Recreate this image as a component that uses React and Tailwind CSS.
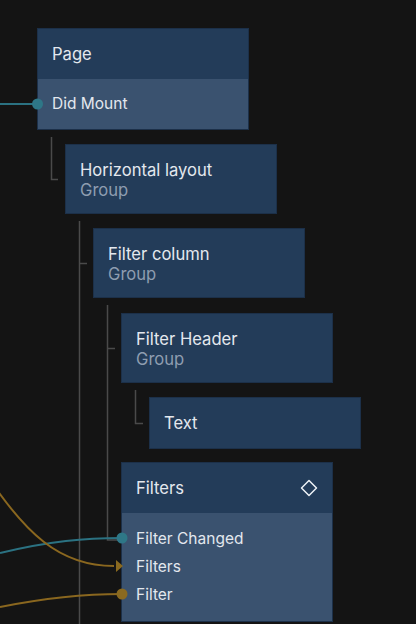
import React from 'react';

const font = { fontFamily: 'Inter, "Noto Sans", sans-serif' };

function Node({ title, subtitle, className = '', children, icon }) {
  return (
    <div className={`w-[212px] border border-[#1c3049] bg-[#233c59] ${className}`}>
      {subtitle !== undefined ? (
        <div className="flex h-[68px] flex-col justify-center px-[14px] pt-[2px]">
          <div className="text-[16.6px] leading-[20px] text-[#e3e8ee]">{title}</div>
          <div className="text-[16.6px] leading-[20px] text-[#8e9db0]">{subtitle}</div>
        </div>
      ) : (
        <div className="flex h-[50px] items-center justify-between px-[14px]">
          <div className="text-[16.6px] leading-[20px] text-[#e3e8ee]">{title}</div>
          {icon}
        </div>
      )}
      {children && <div className="bg-[#3a526f]">{children}</div>}
    </div>
  );
}

function Row({ label }) {
  return (
    <div className="flex h-[28px] items-center px-[14px] text-[15.5px] text-[#e3e8ee]">{label}</div>
  );
}

export default function App() {
  return (
    <div className="relative h-[624px] w-[416px] overflow-hidden bg-[#141414]" style={font}>
      <div className="flex flex-col pt-[28px]">
        <Node title="Page" className="ml-[37px]">
          <div className="flex h-[50px] items-center px-[14px] text-[15.5px] text-[#e3e8ee]">Did Mount</div>
        </Node>
        <Node title="Horizontal layout" subtitle="Group" className="ml-[65px] mt-[14px]" />
        <Node title="Filter column" subtitle="Group" className="ml-[93px] mt-[14px]" />
        <Node title="Filter Header" subtitle="Group" className="ml-[121px] mt-[15px]" />
        <Node title="Text" className="ml-[149px] mt-[14px]" />
        <Node
          title="Filters"
          className="ml-[121px] mt-[13px]"
          icon={
            <svg width="18" height="18" viewBox="0 0 18 18">
              <path d="M9 1.5 L16.5 9 L9 16.5 L1.5 9 Z" fill="none" stroke="#eef2f6" strokeWidth="1.5" strokeLinejoin="round" />
            </svg>
          }
        >
          <div className="py-[12px]">
            <Row label="Filter Changed" />
            <Row label="Filters" />
            <Row label="Filter" />
          </div>
        </Node>
      </div>

      <svg className="pointer-events-none absolute left-0 top-0" width="416" height="624">
        <g stroke="#4a4a4a" strokeWidth="1.5" fill="none">
          <path d="M51.5 137 V179.5 H58" />
          <path d="M79.5 221 V624 M79.5 263.5 H87" />
          <path d="M107.5 305 V540 H121 M107.5 348.5 H115" />
          <path d="M135.5 390 V423.5 H143" />
        </g>
        <g fill="none" strokeWidth="2">
          <path d="M0 104 H37" stroke="#2b7282" />
          <path d="M0 553 C50 541 85 538 122 538" stroke="#2b7282" />
          <path d="M-20 465 C25 535 60 566 114 566" stroke="#8a671f" />
          <path d="M0 607 C50 597 85 594 122 594" stroke="#8a671f" />
        </g>
        <circle cx="37.5" cy="104" r="5.5" fill="#2e7787" />
        <circle cx="122" cy="538" r="5.5" fill="#2e7787" />
        <circle cx="122" cy="594" r="5.5" fill="#8a6a20" />
        <path d="M116 560 L123 566 L116 572 Z" fill="#8a6a20" />
      </svg>
    </div>
  );
}
